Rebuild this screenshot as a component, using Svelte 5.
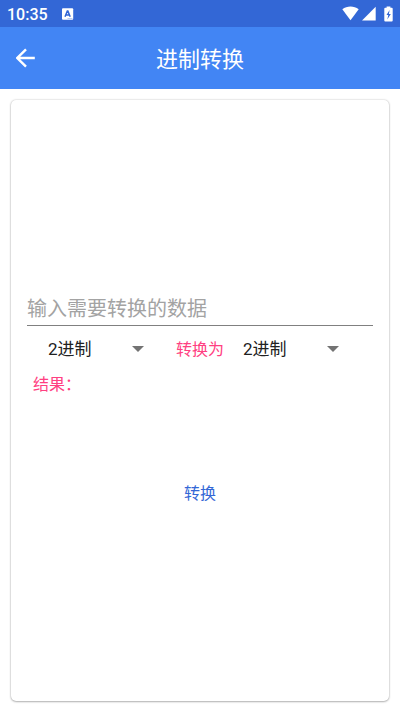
<script lang="ts">
  const bases = [2, 8, 10, 16];

  let value = '';
  let from = 2;
  let to = 2;
  let result = '';

  function convert() {
    const parsed = parseInt(value, from);
    result = Number.isNaN(parsed) ? '' : parsed.toString(to).toUpperCase();
  }
</script>

<div class="screen">
  <div class="status-bar">
    <span class="clock">10:35</span>
    <svg class="badge" width="12" height="12" viewBox="0 0 12 12" aria-hidden="true">
      <rect x="0" y="0.2" width="11.2" height="11.6" rx="1" fill="#fff" />
      <path d="M3 8.7 5.3 3.1h.6l2.3 5.6M4 7h3.2" fill="none" stroke="#3367d6" stroke-width="1.5" />
      <path d="M5.5 10.5h5" stroke="#a9bfee" stroke-width="0.8" />
    </svg>
    <div class="indicators">
      <svg width="17" height="15" viewBox="0 0 17 15" aria-hidden="true">
        <path d="M0.3 3.2C5 -0.4 12 -0.4 16.7 3.2L8.5 14.2Z" fill="#fff" />
      </svg>
      <svg width="14" height="15" viewBox="0 0 14 15" aria-hidden="true">
        <path d="M0 14.5 13.7 0.8V14.5Z" fill="#fff" />
      </svg>
      <svg class="battery" width="9" height="16" viewBox="0 0 9 16" aria-hidden="true">
        <path d="M2.6 0.4h3.8v1.4h1.4q.9 0 .9.9v11.9q0 .9-.9.9H1.2q-.9 0-.9-.9V2.7q0-.9.9-.9h1.4Z" fill="#fff" />
        <path d="M5.6 4 2.5 9h1.8l-1 4.5L6.8 8H4.9Z" fill="#3367d6" />
      </svg>
    </div>
  </div>

  <header class="app-bar">
    <button class="back" aria-label="返回">
      <svg width="20" height="20" viewBox="0 0 20 20" aria-hidden="true">
        <path d="M18.8 10H1.8M10 1.3 1.3 10l8.7 8.7" fill="none" stroke="#fff" stroke-width="2.4" />
      </svg>
    </button>
    <h1>进制转换</h1>
  </header>

  <main>
    <form class="card" on:submit|preventDefault={convert}>
      <input class="value" type="text" placeholder="输入需要转换的数据" aria-label="输入需要转换的数据" bind:value />

      <div class="bases">
        <div class="spinner">
          <select aria-label="原进制" bind:value={from}>
            {#each bases as base}
              <option value={base}>{base}进制</option>
            {/each}
          </select>
        </div>
        <span class="into">转换为</span>
        <div class="spinner">
          <select aria-label="目标进制" bind:value={to}>
            {#each bases as base}
              <option value={base}>{base}进制</option>
            {/each}
          </select>
        </div>
      </div>

      <output class="result">结果：{result}</output>

      <button class="convert" type="submit">转换</button>
    </form>
  </main>
</div>

<style>
  :global(body) {
    margin: 0;
    background: #fff;
  }

  .screen {
    display: flex;
    flex-direction: column;
    min-height: 100vh;
    font-family: Roboto, 'Noto Sans CJK SC', sans-serif;
  }

  .screen * {
    box-sizing: border-box;
  }

  button,
  input,
  select {
    margin: 0;
    border: 0;
    background: none;
    font-family: inherit;
  }

  svg {
    display: block;
  }

  .status-bar {
    display: flex;
    align-items: center;
    height: 27px;
    padding: 0 7px;
    background: #3367d6;
    color: #fff;
  }

  .clock {
    padding-top: 2px;
    font-size: 16px;
    line-height: 24px;
    font-weight: 500;
  }

  .badge {
    margin-left: 14px;
  }

  .indicators {
    display: flex;
    align-items: center;
    gap: 3px;
    margin-left: auto;
  }

  .battery {
    margin-left: 5px;
  }

  .app-bar {
    display: grid;
    grid-template-columns: 52px 1fr 52px;
    align-items: center;
    height: 62px;
    background: #4285f4;
    color: #fff;
  }

  .back {
    height: 48px;
    padding: 0 16px;
  }

  h1 {
    margin: 0;
    padding-top: 4px;
    font-size: 22px;
    line-height: 32px;
    font-weight: 400;
    text-align: center;
  }

  main {
    display: flex;
    flex: 1;
    padding: 11px;
  }

  .card {
    display: flex;
    flex: 1;
    flex-direction: column;
    justify-content: center;
    min-width: 0;
    padding: 16px;
    border-radius: 5px;
    background: #fff;
    box-shadow: 0 0 2px rgba(0, 0, 0, 0.25), 0 1px 2px rgba(0, 0, 0, 0.25);
  }

  .value {
    width: 100%;
    height: 35px;
    padding: 2px 0 0;
    border-bottom: 1px solid #808080;
    border-radius: 0;
    color: #212121;
    font-size: 20px;
    outline: none;
  }

  .value::placeholder {
    color: #a3a3a3;
    opacity: 1;
  }

  .bases {
    display: flex;
    align-items: center;
    height: 45px;
    padding: 0 26px 0 13px;
  }

  .spinner {
    position: relative;
    flex: 1;
  }

  .spinner::after {
    content: '';
    position: absolute;
    top: 50%;
    right: 8px;
    margin-top: -3px;
    border: 6px solid transparent;
    border-top-color: #737373;
    border-bottom: 0;
    pointer-events: none;
  }

  select {
    width: 100%;
    height: 32px;
    padding: 0 24px 0 8px;
    appearance: none;
    color: #212121;
    font-size: 17px;
  }

  .into,
  .result {
    padding-top: 2px;
    color: #ff4081;
    font-size: 16px;
    line-height: 24px;
  }

  .into {
    padding-right: 11px;
    padding-left: 24px;
    white-space: nowrap;
  }

  .result {
    padding-left: 6px;
  }

  .convert {
    align-self: center;
    height: 36px;
    margin-top: 77px;
    padding: 0 24px;
    color: #3367d6;
    font-size: 16px;
  }
</style>
